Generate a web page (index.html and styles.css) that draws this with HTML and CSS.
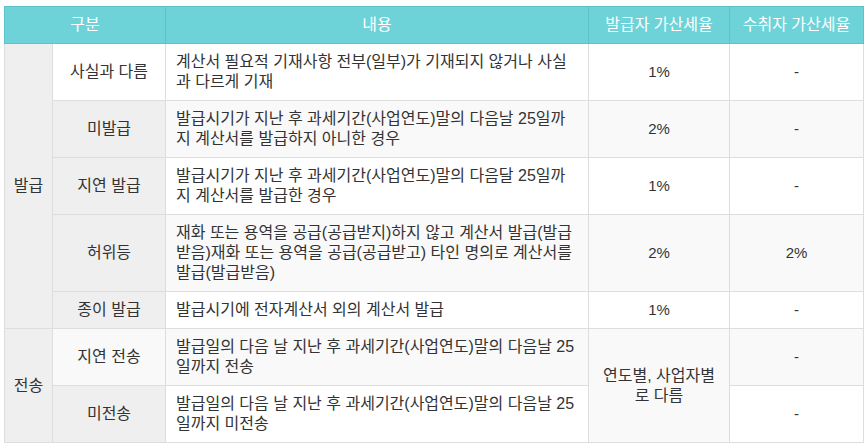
FILE: index.html
```html
<!DOCTYPE html>
<html lang="ko">
<head>
<meta charset="utf-8">
<link rel="stylesheet" href="styles.css">
</head>
<body>
<div class="wrap">
<table class="tbl">
  <colgroup>
    <col class="c1"><col class="c2"><col class="c3"><col class="c4"><col class="c5">
  </colgroup>
  <thead>
    <tr>
      <th colspan="2">구분</th>
      <th>내용</th>
      <th>발급자 가산세율</th>
      <th>수취자 가산세율</th>
    </tr>
  </thead>
  <tbody>
    <tr>
      <th rowspan="5" class="g grp">발급</th>
      <th class="w">사실과 다름</th>
      <td class="txt">계산서 필요적 기재사항 전부(일부)가 기재되지 않거나 사실과 다르게 기재</td>
      <td class="num">1%</td>
      <td class="num">-</td>
    </tr>
    <tr class="alt">
      <th class="g">미발급</th>
      <td class="txt">발급시기가 지난 후 과세기간(사업연도)말의 다음날 25일까지 계산서를 발급하지 아니한 경우</td>
      <td class="num">2%</td>
      <td class="num">-</td>
    </tr>
    <tr>
      <th class="g">지연 발급</th>
      <td class="txt">발급시기가 지난 후 과세기간(사업연도)말의 다음달 25일까지 계산서를 발급한 경우</td>
      <td class="num">1%</td>
      <td class="num">-</td>
    </tr>
    <tr class="alt">
      <th class="g">허위등</th>
      <td class="txt">재화 또는 용역을 공급(공급받지)하지 않고 계산서 발급(발급받음)재화 또는 용역을 공급(공급받고) 타인 명의로 계산서를 발급(발급받음)</td>
      <td class="num">2%</td>
      <td class="num">2%</td>
    </tr>
    <tr>
      <th class="g">종이 발급</th>
      <td class="txt">발급시기에 전자계산서 외의 계산서 발급</td>
      <td class="num">1%</td>
      <td class="num">-</td>
    </tr>
    <tr class="alt">
      <th rowspan="2" class="g grp">전송</th>
      <th>지연 전송</th>
      <td class="txt">발급일의 다음 날 지난 후 과세기간(사업연도)말의 다음날 25일까지 전송</td>
      <td rowspan="2">연도별, 사업자별로 다름</td>
      <td class="num">-</td>
    </tr>
    <tr>
      <th class="g">미전송</th>
      <td class="txt">발급일의 다음 날 지난 후 과세기간(사업연도)말의 다음날 25일까지 미전송</td>
      <td class="num">-</td>
    </tr>
  </tbody>
</table>
</div>
</body>
</html>
```

FILE: styles.css
```css
html, body {
  margin: 0;
  padding: 0;
  background: #ffffff;
}
.wrap {
  padding: 6px 4px;
}
.tbl {
  width: 859px;
  border-collapse: collapse;
  table-layout: fixed;
  font-family: "Liberation Sans", "Noto Sans CJK KR", sans-serif;
  font-size: 16px;
  line-height: 20px;
  color: #333333;
}
.c1 { width: 48px; }
.c2 { width: 113px; }
.c3 { width: 423px; }
.c4 { width: 141px; }
.c5 { width: 134px; }
.tbl th, .tbl td {
  border: 1px solid #dddddd;
  padding: 8px 10px;
  text-align: center;
  vertical-align: middle;
  font-weight: normal;
  background: #ffffff;
}
.tbl thead th {
  background: #6dd3d8;
  border-color: #5dc3c8;
  color: #ffffff;
}
.tbl tr.alt th, .tbl tr.alt td {
  background: #f9f9f9;
}
.tbl tbody th.g, .tbl tr.alt th.g {
  background: #efefef;
}
.tbl tbody th.grp {
  padding: 8px 2px;
  white-space: nowrap;
}
.tbl tbody th.w {
  background: #ffffff;
}
.tbl td.txt {
  text-align: left;
}
.tbl td.num {
  font-size: 15px;
}
```
